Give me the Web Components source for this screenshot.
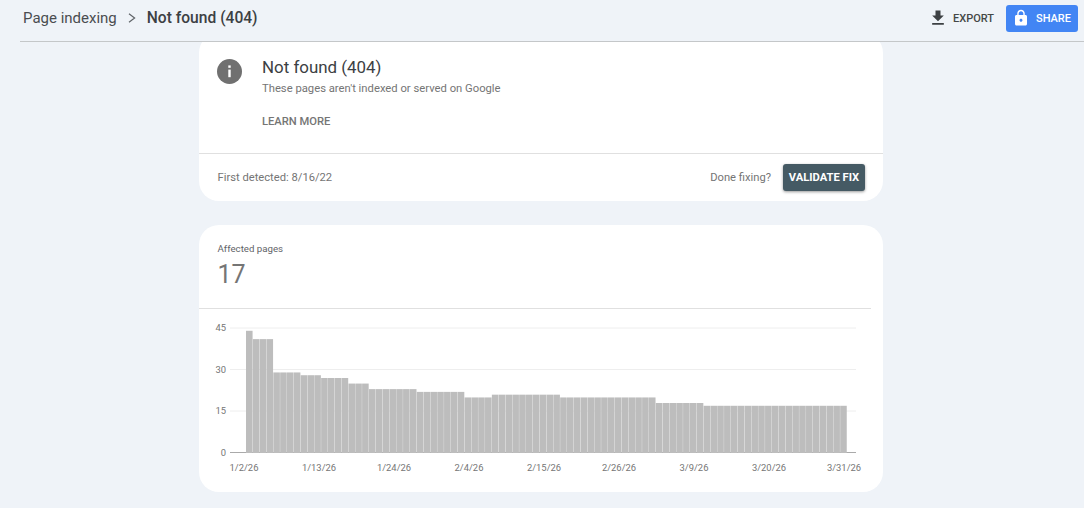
<!DOCTYPE html>
<html>
<head>
<meta charset="utf-8">
<title>Not found (404)</title>
<style>
  html, body { margin: 0; height: 100%; overflow: hidden; background: #eff3f8; }
  body { font-family: Roboto, "Liberation Sans", sans-serif; color: #444746; }
</style>
</head>
<body>
<indexing-page>
  <page-header slot="header" parent="Page indexing" current="Not found (404)"></page-header>
  <issue-card title="Not found (404)" detail="These pages aren't indexed or served on Google" detected="First detected: 8/16/22"></issue-card>
  <pages-card label="Affected pages" total="17"></pages-card>
</indexing-page>

<script>
class IndexingPage extends HTMLElement {
  constructor() {
    super();
    this.attachShadow({ mode: 'open' });
    this.shadowRoot.innerHTML = `
      <style>
        :host { display: flex; flex-direction: column; height: 508px; overflow: hidden; }
        main {
          flex: 1;
          min-height: 0;
          overflow: hidden;
          display: flex;
          flex-direction: column;
          gap: 24px;
          width: 684px;
          padding-left: 199px;
        }
      </style>
      <slot name="header"></slot>
      <main><slot></slot></main>
    `;
  }
}

class PageHeader extends HTMLElement {
  constructor() {
    super();
    this.attachShadow({ mode: 'open' });
    this.shadowRoot.innerHTML = `
      <style>
        :host { display: block; padding-left: 20px; flex: none; }
        .bar {
          height: 42px;
          box-sizing: border-box;
          border-bottom: 1px solid #c4c7c9;
          display: flex;
          align-items: center;
          padding: 0 6px 5px 3px;
        }
        .crumbs { display: flex; align-items: center; font-size: 15px; color: #4a4d50; flex: 1; }
        .arrow { width: 8px; height: 10px; margin: 0 11px 0 11px; }
        b { font-size: 15.6px; font-weight: 500; color: #3c4043; }
        .export {
          display: flex; align-items: center; gap: 5px;
          font-size: 11px; font-weight: 500; color: #444746;
          margin-right: 12px;
        }
        .share {
          width: 72px; height: 27px;
          box-sizing: border-box;
          display: flex; align-items: center; gap: 6px;
          padding-left: 6px;
          background: #4285f4; color: #fff; border-radius: 3px;
          font-size: 11px; font-weight: 500;
        }
      </style>
      <div class="bar">
        <div class="crumbs">
          <span>${this.getAttribute('parent')}</span>
          <svg class="arrow" viewBox="0 0 8 10"><path d="M1 .8 6.6 5 1 9.2" fill="none" stroke="#5f6368" stroke-width="1.2"/></svg>
          <b>${this.getAttribute('current')}</b>
        </div>
        <div class="export">
          <svg width="20" height="20" viewBox="0 0 24 24" fill="#3c4043"><path d="M19 9h-4V3H9v6H5l7 7 7-7zM5 18v2h14v-2H5z"/></svg>
          EXPORT
        </div>
        <div class="share">
          <svg width="18" height="18" viewBox="0 0 24 24" fill="#fff" style="flex:none"><path d="M18 8h-1V6c0-2.76-2.24-5-5-5S7 3.24 7 6v2H6c-1.1 0-2 .9-2 2v10c0 1.1.9 2 2 2h12c1.1 0 2-.9 2-2V10c0-1.1-.9-2-2-2zm-6 9c-1.1 0-2-.9-2-2s.9-2 2-2 2 .9 2 2-.9 2-2 2zm3.1-9H8.9V6c0-1.71 1.39-3.1 3.1-3.1 1.71 0 3.1 1.39 3.1 3.1v2z"/></svg>
          SHARE
        </div>
      </div>
    `;
  }
}

class IssueCard extends HTMLElement {
  constructor() {
    super();
    this.attachShadow({ mode: 'open' });
    this.shadowRoot.innerHTML = `
      <style>
        :host {
          display: block;
          flex: none;
          margin-top: -9px;
          background: #fff;
          border-radius: 20px;
        }
        .top {
          height: 121px;
          box-sizing: border-box;
          padding: 26px 18px 0 18px;
          display: flex;
          gap: 20px;
          border-bottom: 1px solid #e0e0e0;
        }
        .icon { width: 25px; height: 25px; flex: none; }
        h2 { margin: -2px 0 0; font-size: 16.9px; line-height: 20px; font-weight: 400; color: #3c4043; }
        p { margin: 4px 0 0; font-size: 11.25px; line-height: 16px; color: #757575; }
        .learn { margin-top: 17px; font-size: 11.2px; line-height: 16px; font-weight: 500; color: #757575; }
        .foot {
          height: 47px;
          display: flex;
          align-items: center;
          padding: 0 18px 0 18.5px;
          font-size: 11.2px;
          color: #757575;
        }
        .detected { flex: 1; }
        .done { margin-right: 12px; }
        .validate {
          width: 82px; height: 27px;
          display: flex; align-items: center; justify-content: center;
          background: #455a64; color: #fff;
          border-radius: 3px;
          font-size: 11.2px; font-weight: 700;
          box-shadow: 0 1px 3px rgba(0,0,0,.4);
        }
      </style>
      <div class="top">
        <svg class="icon" viewBox="0 0 25 25">
          <circle cx="12.5" cy="12.5" r="12.5" fill="#707070"/>
          <rect x="11.3" y="6.4" width="2.4" height="2.4" fill="#fff"/>
          <rect x="11.3" y="10.6" width="2.4" height="7.6" fill="#fff"/>
        </svg>
        <div>
          <h2>${this.getAttribute('title')}</h2>
          <p>${this.getAttribute('detail')}</p>
          <div class="learn">LEARN MORE</div>
        </div>
      </div>
      <div class="foot">
        <span class="detected">${this.getAttribute('detected')}</span>
        <span class="done">Done fixing?</span>
        <div class="validate">VALIDATE FIX</div>
      </div>
    `;
  }
}

class PagesCard extends HTMLElement {
  constructor() {
    super();
    this.attachShadow({ mode: 'open' });
    this.shadowRoot.innerHTML = `
      <style>
        :host { display: block; flex: none; background: #fff; border-radius: 20px; }
        .head {
          height: 84px;
          box-sizing: border-box;
          margin-right: 12px;
          padding: 17px 0 0 18.5px;
          border-bottom: 1px solid #e0e0e0;
        }
        .label { font-size: 9.7px; line-height: 14px; color: #5f6368; }
        .total { font-size: 25px; line-height: 30px; margin-top: 4px; color: #757575; }
      </style>
      <div class="head">
        <div class="label">${this.getAttribute('label')}</div>
        <div class="total">${this.getAttribute('total')}</div>
      </div>
      <bar-chart></bar-chart>
    `;
  }
}

class BarChart extends HTMLElement {
  constructor() {
    super();
    this.attachShadow({ mode: 'open' });
    // [value, how many days in a row]
    const runs = [[44,1],[41,3],[29,4],[28,3],[27,4],[25,3],[23,7],[22,7],[20,4],[21,10],[20,14],[18,7],[17,21]];
    const left = 47, step = 601 / 88, base = 144, unit = 125 / 45;
    let bars = '', i = 0;
    runs.forEach(([value, count]) => {
      for (let n = 0; n < count; n++, i++) {
        const h = value * unit;
        bars += `<rect x="${(left + i * step).toFixed(2)}" y="${(base - h).toFixed(2)}" width="${(step - 0.25).toFixed(2)}" height="${h.toFixed(2)}"/>`;
      }
    });
    const grid = [[45, 19], [30, 60.5], [15, 102]].map(([v, y]) =>
      `<line x1="31" x2="657" y1="${y}" y2="${y}" stroke="#eeeeee"/><text class="y" x="27" y="${y + 3}">${v}</text>`).join('');
    const dates = ['1/2/26','1/13/26','1/24/26','2/4/26','2/15/26','2/26/26','3/9/26','3/20/26','3/31/26'];
    const labels = dates.map((d, k) => `<text class="x" x="${45 + k * 75}" y="161.5">${d}</text>`).join('');
    this.shadowRoot.innerHTML = `
      <style>
        :host { display: block; height: 183px; }
        svg { display: block; }
        text { font-family: Roboto, "Liberation Sans", sans-serif; font-size: 9.4px; fill: #757575; }
        .y { text-anchor: end; }
        .x { text-anchor: middle; }
        .bars { fill: #bdbdbd; }
      </style>
      <svg width="684" height="183" viewBox="0 0 684 183">
        ${grid}
        <line x1="31" x2="657" y1="143.5" y2="143.5" stroke="#aaaaaa"/>
        <text class="y" x="27" y="146.5">0</text>
        <g class="bars">${bars}</g>
        ${labels}
      </svg>
    `;
  }
}

customElements.define('indexing-page', IndexingPage);
customElements.define('page-header', PageHeader);
customElements.define('issue-card', IssueCard);
customElements.define('pages-card', PagesCard);
customElements.define('bar-chart', BarChart);
</script>
</body>
</html>
